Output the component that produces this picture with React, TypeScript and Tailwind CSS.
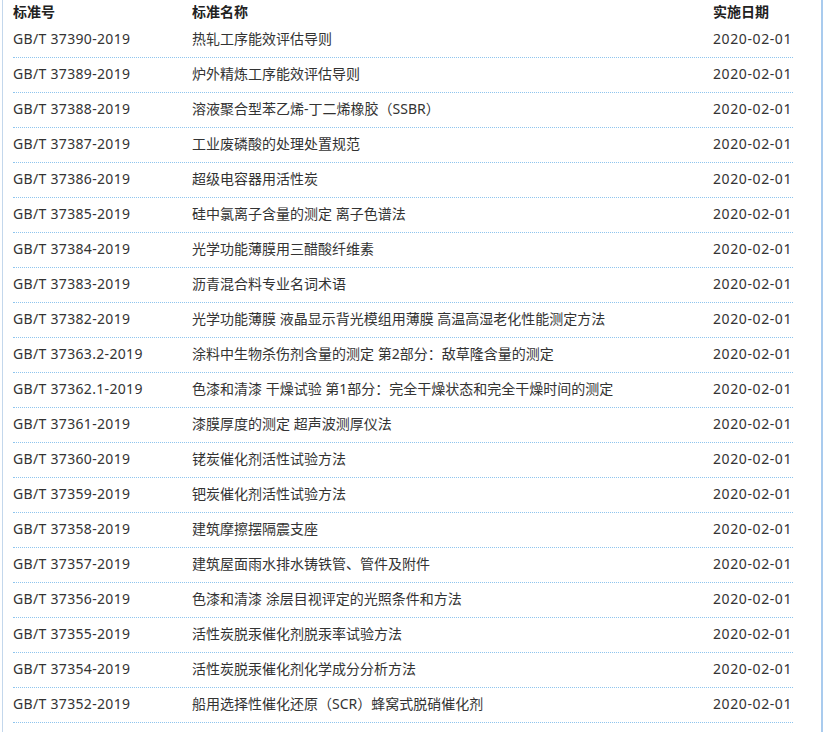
import React from "react"

const rows: [string, string][] = [
  ["GB/T 37390-2019", "热轧工序能效评估导则"],
  ["GB/T 37389-2019", "炉外精炼工序能效评估导则"],
  ["GB/T 37388-2019", "溶液聚合型苯乙烯-丁二烯橡胶（SSBR）"],
  ["GB/T 37387-2019", "工业废磷酸的处理处置规范"],
  ["GB/T 37386-2019", "超级电容器用活性炭"],
  ["GB/T 37385-2019", "硅中氯离子含量的测定 离子色谱法"],
  ["GB/T 37384-2019", "光学功能薄膜用三醋酸纤维素"],
  ["GB/T 37383-2019", "沥青混合料专业名词术语"],
  ["GB/T 37382-2019", "光学功能薄膜 液晶显示背光模组用薄膜 高温高湿老化性能测定方法"],
  ["GB/T 37363.2-2019", "涂料中生物杀伤剂含量的测定 第2部分：敌草隆含量的测定"],
  ["GB/T 37362.1-2019", "色漆和清漆 干燥试验 第1部分：完全干燥状态和完全干燥时间的测定"],
  ["GB/T 37361-2019", "漆膜厚度的测定 超声波测厚仪法"],
  ["GB/T 37360-2019", "铑炭催化剂活性试验方法"],
  ["GB/T 37359-2019", "钯炭催化剂活性试验方法"],
  ["GB/T 37358-2019", "建筑摩擦摆隔震支座"],
  ["GB/T 37357-2019", "建筑屋面雨水排水铸铁管、管件及附件"],
  ["GB/T 37356-2019", "色漆和清漆 涂层目视评定的光照条件和方法"],
  ["GB/T 37355-2019", "活性炭脱汞催化剂脱汞率试验方法"],
  ["GB/T 37354-2019", "活性炭脱汞催化剂化学成分分析方法"],
  ["GB/T 37352-2019", "船用选择性催化还原（SCR）蜂窝式脱硝催化剂"],
]

export default function App() {
  return (
    <div
      className="w-[823px] h-[732px] overflow-hidden bg-white text-[14px] text-[#333]"
      style={{ fontFamily: '"Noto Sans", "Noto Sans CJK SC", sans-serif' }}
    >
      <div className="ml-[2px] h-full border-l border-r-2 border-l-[#c3d7ec] border-r-[#a9cbee] pl-[10px]">
        <div className="w-[780px]">
          <div className="flex h-[23px] items-center font-bold text-[#222]">
            <div className="w-[179px]">标准号</div>
            <div className="w-[521px]">标准名称</div>
            <div className="w-[80px]">实施日期</div>
          </div>
          {rows.map(([code, name]) => (
            <div
              key={code}
              className="flex h-[35px] items-center border-b border-dotted border-[#8fc5ee] pb-[3px]"
            >
              <div className="w-[179px] whitespace-nowrap tracking-[0.32px]">{code}</div>
              <div className="w-[521px] whitespace-nowrap">{name}</div>
              <div className="w-[80px] whitespace-nowrap tracking-[0.6px]">2020-02-01</div>
            </div>
          ))}
        </div>
      </div>
    </div>
  )
}
